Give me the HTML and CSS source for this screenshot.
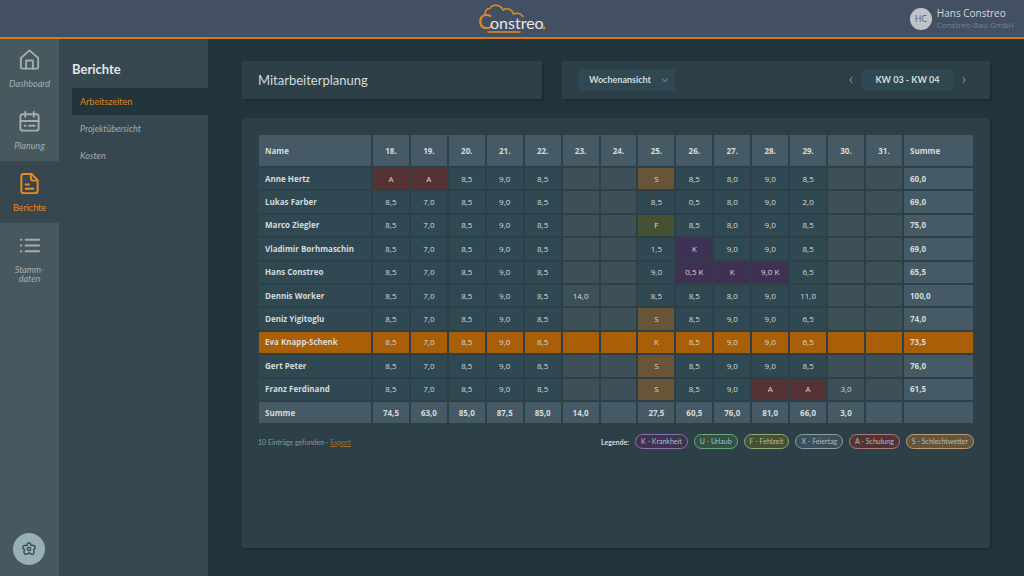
FILE: index.html
```html
<!DOCTYPE html>
<html lang="de">
<head>
    <meta charset="UTF-8">
    <meta name="viewport" content="width=device-width, initial-scale=1.0">
    <title>Constreo - Mitarbeiterplanung</title>
    <link rel="stylesheet" href="styles.css">
</head>
<body>
    <header class="topbar">
        <a href="#" class="logo" aria-label="Constreo">
            <svg width="68" height="30" viewBox="0 0 68 30">
                <path class="logo-line" d="M7 10C7 6 9 4.500 12 4.500C14 0 22 0 25 6C29 3.500 34 5 35.500 10C39 8.500 43 9.500 45 12.500"/>
                <path class="logo-line" d="M10 28H42"/>
                <text class="logo-c" x="0" y="25">C</text>
                <text class="logo-text" x="12" y="25">onstreo</text>
                <circle class="logo-dot" cx="66" cy="24" r="1.5"/>
            </svg>
        </a>
        <div class="user">
            <span class="avatar">HC</span>
            <div>
                <div class="user-name">Hans Constreo</div>
                <div class="user-company">Constreo-Bau GmbH</div>
            </div>
        </div>
    </header>

    <div class="layout">
        <nav class="sidebar">
            <a href="#" class="nav-item">
                <svg class="icon" viewBox="0 0 24 24"><path d="M3 10.5L12 2.5L21 10.5V20a1.5 1.5 0 0 1-1.5 1.5h-15A1.5 1.5 0 0 1 3 20z"/><path d="M8.5 21.5V13h7v8.5"/></svg>
                Dashboard
            </a>
            <a href="#" class="nav-item">
                <svg class="icon" viewBox="0 0 24 24"><rect x="2.5" y="4.5" width="19" height="17" rx="2.5"/><path d="M2.5 11.5h19M7.5 2v5M16.500 2v5M7 16.500h1M11.500 16.500h6"/></svg>
                Planung
            </a>
            <a href="#" class="nav-item active">
                <svg class="icon" viewBox="0 0 24 24"><path d="M14 2H6a2.500 2.500 0 0 0-2.500 2.500v15A2.500 2.500 0 0 0 6 22h12a2.500 2.500 0 0 0 2.500-2.500V8.500z"/><path d="M13.500 2.500v4a2.500 2.500 0 0 0 2.500 2.500h4M8 13h3.500M8 17.500h8"/></svg>
                Berichte
            </a>
            <a href="#" class="nav-item">
                <svg class="icon" viewBox="0 0 24 24"><path d="M3 6h.5M3 12h.5M3 18h.5M8 6h14M8 12h14M8 18h14"/></svg>
                Stamm-<br>daten
            </a>
            <button class="settings" aria-label="Einstellungen">
                <svg viewBox="0 0 24 24"><path d="M9.500 4.500Q12 1 14.500 4.500L15.300 6.800L18 6.600Q22.500 7 21 11L18.800 13L19.500 15.800Q20 20.500 16 20L12 17.800L8 20Q4 20.500 4.500 15.800L5.200 13L3 11Q1.500 7 6 6.600L8.700 6.800Z"/><circle cx="12" cy="12" r="2.500"/></svg>
            </button>
        </nav>

        <nav class="submenu">
            <h2>Berichte</h2>
            <a href="#" class="active">Arbeitszeiten</a>
            <a href="#">Projektübersicht</a>
            <a href="#">Kosten</a>
        </nav>

        <main class="content">
            <div class="toolbar">
                <div class="card title-card">
                    <h1>Mitarbeiterplanung</h1>
                </div>
                <div class="card filter-card">
                    <div class="select-box">
                        <select aria-label="Ansicht">
                            <option>Wochenansicht</option>
                            <option>Monatsansicht</option>
                        </select>
                        <svg class="chevron" viewBox="0 0 8 8"><path d="M1.500 3L4 5.500L6.500 3"/></svg>
                    </div>
                    <div class="pager">
                        <button class="arrow" aria-label="Zurück"><svg class="chevron" viewBox="0 0 8 8"><path d="M5 1.500L3 4L5 6.500"/></svg></button>
                        <button class="week">KW 03 - KW 04</button>
                        <button class="arrow" aria-label="Weiter"><svg class="chevron" viewBox="0 0 8 8"><path d="M3 1.500L5 4L3 6.500"/></svg></button>
                    </div>
                </div>
            </div>

            <div class="card report">
                <table id="planTable">
                    <thead></thead>
                    <tbody></tbody>
                    <tfoot></tfoot>
                </table>
                <div class="report-footer">
                    <div class="entries">10 Einträge gefunden - <a href="#">Export</a></div>
                    <div class="legend">
                        <strong>Legende:</strong>
                        <span class="tag type-K">K - Krankheit</span>
                        <span class="tag type-U">U - Urlaub</span>
                        <span class="tag type-F">F - Fehlzeit</span>
                        <span class="tag type-X">X - Feiertag</span>
                        <span class="tag type-A">A - Schulung</span>
                        <span class="tag type-S">S - Schlechtwetter</span>
                    </div>
                </div>
            </div>
        </main>
    </div>

    <script src="script.js"></script>
</body>
</html>
```

FILE: styles.css
```css
* {
    box-sizing: border-box;
}

body {
    margin: 0;
    min-height: 100vh;
    display: flex;
    flex-direction: column;
    font-family: Lato, 'Open Sans', sans-serif;
    font-size: 8px;
    line-height: 10px;
    background-color: #23353c;
    color: #d5dadc;
}

a {
    color: inherit;
    text-decoration: none;
}

button, select {
    font: inherit;
    color: inherit;
    border: none;
    padding: 0;
    cursor: pointer;
}

svg {
    display: block;
    fill: none;
    stroke: currentColor;
    stroke-linecap: round;
    stroke-linejoin: round;
}

/* Header */
.topbar {
    display: grid;
    grid-template-columns: 1fr auto 1fr;
    align-items: center;
    height: 39px;
    padding: 0 10px;
    background-color: #435063;
    border-bottom: 2px solid #d17c1b;
}

.logo {
    grid-column: 2;
}

.logo-line {
    stroke: #e28a1f;
    stroke-width: 1.6;
}

.logo-c, .logo-text {
    stroke: none;
    font-weight: 400;
}

.logo-c {
    font-size: 21px;
    fill: #e28a1f;
}

.logo-text {
    font-size: 16px;
    fill: #e4e7ea;
}

.logo-dot {
    stroke: none;
    fill: #e28a1f;
}

.user {
    display: flex;
    align-items: center;
    justify-self: end;
    gap: 5px;
    font-family: 'Open Sans', sans-serif;
}

.avatar {
    width: 22px;
    border-radius: 50%;
    background-color: #bfc3c8;
    color: #58626f;
    font-size: 9px;
    line-height: 22px;
    text-align: center;
}

.user-name {
    font-size: 10px;
    line-height: 13px;
}

.user-company {
    font-size: 8px;
    color: #6e8596;
}

/* Navigation */
.layout {
    display: flex;
    flex: 1;
}

.sidebar {
    display: flex;
    flex-direction: column;
    width: 59px;
    background-color: #48585f;
}

.nav-item {
    display: flex;
    flex-direction: column;
    align-items: center;
    height: 62px;
    padding-top: 11px;
    font-size: 9px;
    line-height: 9px;
    font-style: italic;
    text-align: center;
    color: #a3acb2;
}

.nav-item:first-child {
    height: 60px;
    padding-top: 9px;
}

.nav-item.active {
    background-color: #37474f;
    font-style: normal;
    color: #ee8a1d;
}

.icon {
    width: 23px;
    height: 23px;
    margin-bottom: 8px;
    stroke-width: 2;
}

.settings {
    width: 32px;
    height: 32px;
    margin: auto auto 11px 13px;
    padding: 8px;
    border-radius: 50%;
    background-color: #97b0b8;
    color: #37474f;
}

.settings svg {
    stroke-width: 2;
}

.submenu {
    width: 149px;
    padding: 22px 0 0 13px;
    background-color: #37474f;
}

.submenu h2 {
    margin: 0 0 11px;
    font-size: 13px;
    line-height: 16px;
    color: #e0e4e6;
}

.submenu a {
    display: block;
    padding-left: 8px;
    font-size: 9px;
    line-height: 27px;
    font-style: italic;
    color: #a3acb2;
}

.submenu a.active {
    background-color: #23353c;
    font-style: normal;
    color: #de8420;
}

/* Content */
.content {
    display: flex;
    flex-direction: column;
    flex: 1;
    gap: 19px;
    padding: 22px 34px 28px;
}

.card {
    background-color: #2d4047;
    border-radius: 2px;
    box-shadow: 2px 2px 2px #1a2a38;
}

.toolbar {
    display: flex;
    gap: 20px;
    height: 38px;
}

.title-card {
    display: flex;
    align-items: center;
    flex: 0 0 300px;
    padding: 0 16px;
}

.title-card h1 {
    margin: 0;
    font-size: 13px;
    line-height: 16px;
    font-weight: 400;
}

.filter-card {
    display: flex;
    align-items: center;
    justify-content: space-between;
    flex: 1;
    padding: 0 15px 0 16px;
    font-size: 9px;
    font-weight: 700;
}

.select-box {
    display: flex;
    align-items: center;
    position: relative;
}

.select-box select {
    appearance: none;
    width: 97px;
    height: 22px;
    padding: 0 11px;
    border-radius: 3px;
    background-color: #304852;
}

.chevron {
    width: 8px;
    height: 8px;
    color: #93a0a6;
}

.select-box .chevron {
    position: absolute;
    right: 6px;
    pointer-events: none;
}

.pager {
    display: flex;
    align-items: center;
}

.arrow {
    padding: 7px;
    background: none;
}

.week {
    width: 91px;
    height: 22px;
    border-radius: 3px;
    background-color: #304852;
}

.report {
    flex: 1;
    padding: 15px;
}

/* Table */
#planTable {
    width: 100%;
    height: 292px;
    table-layout: fixed;
    border-spacing: 2px;
    font-family: 'Open Sans', sans-serif;
}

#planTable th, #planTable td {
    padding: 0;
    background-color: #304852;
    text-align: center;
}

#planTable thead tr {
    height: 31px;
}

#planTable tfoot tr {
    height: 21px;
}

#planTable .name, #planTable .sum {
    width: 112px;
    padding-left: 6px;
    text-align: left;
    font-weight: 700;
}

#planTable .sum {
    width: 69px;
}

#planTable thead th, #planTable tfoot th, #planTable tfoot td, #planTable .sum {
    background-color: #455a64;
    font-weight: 700;
}

#planTable td.weekend {
    background-color: #3d4f57;
}

#planTable tfoot td.weekend {
    background-color: #455a64;
}

#planTable .type-K, .tag.type-K {
    background-color: #3f3153;
}

#planTable .type-F, .tag.type-F {
    background-color: #445232;
}

#planTable .type-A, .tag.type-A {
    background-color: #553334;
}

#planTable .type-S, .tag.type-S {
    background-color: #685437;
}

.tag.type-U {
    background-color: #305440;
}

.tag.type-X {
    background-color: #3b505a;
}

#planTable tr.highlight th, #planTable tr.highlight td {
    background-color: #a95f08;
}

/* Legend */
.report-footer {
    display: flex;
    align-items: center;
    justify-content: space-between;
    padding: 9px 1px 0;
    font-size: 7px;
}

.entries {
    color: #8b989d;
}

.entries a {
    color: #a66c2b;
    text-decoration: underline;
}

.legend {
    display: flex;
    align-items: center;
    gap: 6px;
}

.tag {
    padding: 1px 5px;
    border: 1px solid #8f9da1;
    border-radius: 8px;
    line-height: 11px;
    color: #b4bcbf;
}

.tag.type-K {
    border-color: #8a74a6;
}

.tag.type-U {
    border-color: #6fa384;
}

.tag.type-F {
    border-color: #93a676;
}

.tag.type-A {
    border-color: #a87c7d;
}

.tag.type-S {
    border-color: #b59c76;
}
```

FILE: script.js
```js
const days = ["18.", "19.", "20.", "21.", "22.", "23.", "24.", "25.", "26.", "27.", "28.", "29.", "30.", "31."];
const weekend = [5, 6, 12, 13];

const rows = [
    ["Anne Hertz", "A", "A", "8,5", "9,0", "8,5", "", "", "S", "8,5", "8,0", "9,0", "8,5", "", "", "60,0"],
    ["Lukas Farber", "8,5", "7,0", "8,5", "9,0", "8,5", "", "", "8,5", "0,5", "8,0", "9,0", "2,0", "", "", "69,0"],
    ["Marco Ziegler", "8,5", "7,0", "8,5", "9,0", "8,5", "", "", "F", "8,5", "8,0", "9,0", "8,5", "", "", "75,0"],
    ["Vladimir Borhmaschin", "8,5", "7,0", "8,5", "9,0", "8,5", "", "", "1,5", "K", "9,0", "9,0", "8,5", "", "", "69,0"],
    ["Hans Constreo", "8,5", "7,0", "8,5", "9,0", "8,5", "", "", "9,0", "0,5 K", "K", "9,0 K", "6,5", "", "", "65,5"],
    ["Dennis Worker", "8,5", "7,0", "8,5", "9,0", "8,5", "14,0", "", "8,5", "8,5", "8,0", "9,0", "11,0", "", "", "100,0"],
    ["Deniz Yigitoglu", "8,5", "7,0", "8,5", "9,0", "8,5", "", "", "S", "8,5", "9,0", "9,0", "6,5", "", "", "74,0"],
    ["Eva Knapp-Schenk", "8,5", "7,0", "8,5", "9,0", "8,5", "", "", "K", "8,5", "9,0", "9,0", "6,5", "", "", "73,5"],
    ["Gert Peter", "8,5", "7,0", "8,5", "9,0", "8,5", "", "", "S", "8,5", "9,0", "9,0", "8,5", "", "", "76,0"],
    ["Franz Ferdinand", "8,5", "7,0", "8,5", "9,0", "8,5", "", "", "S", "8,5", "9,0", "A", "A", "3,0", "", "61,5"]
];
const totals = ["Summe", "74,5", "63,0", "85,0", "87,5", "85,0", "14,0", "", "27,5", "60,5", "76,0", "81,0", "66,0", "3,0", "", ""];

function addRow(section, values, header) {
    const tr = section.insertRow();
    values.forEach((value, i) => {
        const cell = document.createElement(header || i === 0 ? "th" : "td");
        cell.textContent = value;
        if (i === 0) {
            cell.className = "name";
        } else if (i === values.length - 1) {
            cell.className = "sum";
        } else if (!header) {
            const type = value.match(/[A-Z]$/);
            if (type) {
                cell.className = "type-" + type[0];
            } else if (weekend.includes(i - 1)) {
                cell.className = "weekend";
            }
        }
        tr.appendChild(cell);
    });
    return tr;
}

const table = document.getElementById("planTable");
addRow(table.tHead, ["Name", ...days, "Summe"], true);
rows.forEach(row => {
    const tr = addRow(table.tBodies[0], row, false);
    if (row[0] === "Eva Knapp-Schenk") {
        tr.className = "highlight";
    }
});
addRow(table.tFoot, totals, false);
```
